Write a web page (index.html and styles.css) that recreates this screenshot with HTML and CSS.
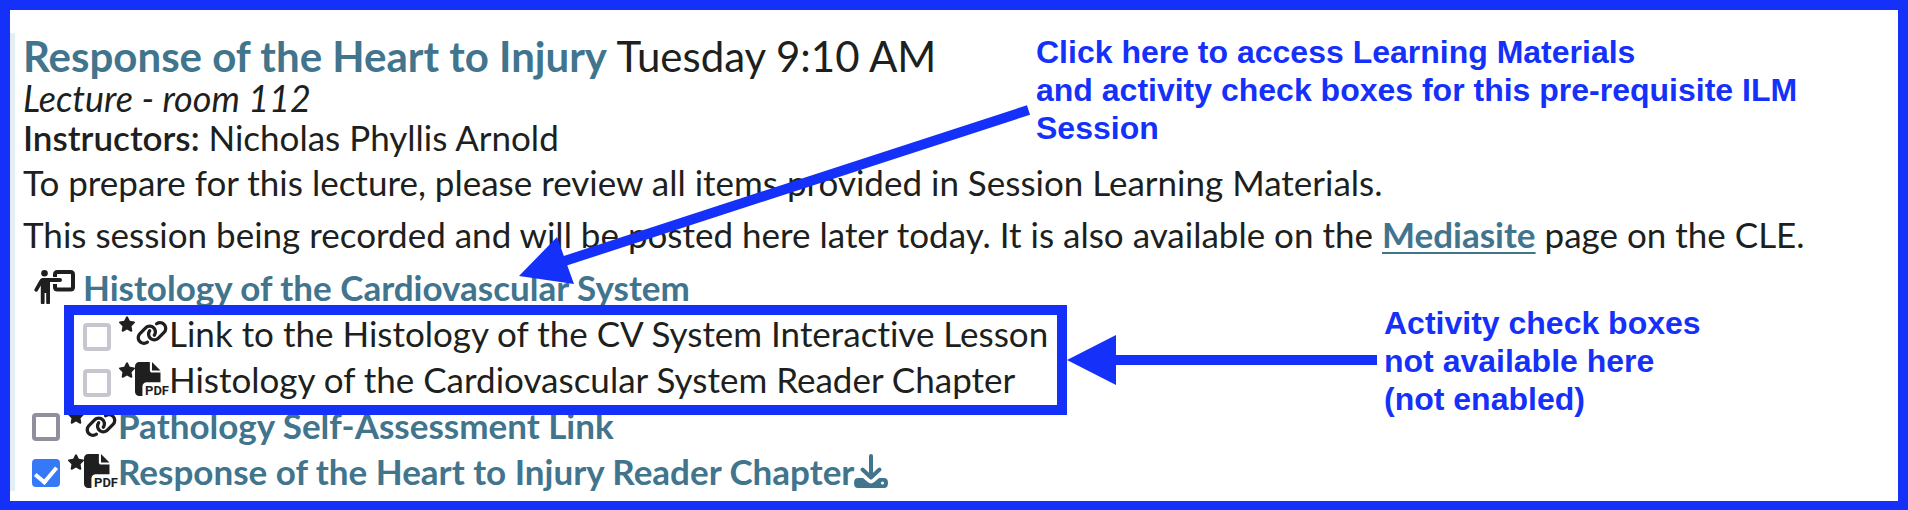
FILE: index.html
```
<!DOCTYPE html>
<html lang="en">
<head>
<meta charset="utf-8">
<title>Response of the Heart to Injury</title>
<link rel="stylesheet" href="styles.css">
</head>
<body>
<svg class="sprite" aria-hidden="true">
  <symbol id="star" viewBox="24 0 528 512"><path d="M316.9 18C311.6 7 300.4 0 288.1 0s-23.4 7-28.8 18L195 150.3 51.4 171.5c-12 1.8-22 10.2-25.7 21.7s-.7 24.2 7.9 32.7L137.8 329 113.2 474.7c-2 12 3 24.2 12.9 31.3s23 8 33.8 2.3l128.3-68.5 128.3 68.5c10.8 5.7 23.9 4.9 33.8-2.3s14.9-19.3 12.9-31.3L438.5 329 542.7 225.9c8.6-8.5 11.7-21.2 7.9-32.7s-13.7-19.9-25.7-21.7L381.2 150.3 316.9 18z"/></symbol>
  <symbol id="link" viewBox="0 0 640 512"><path d="M579.8 267.7c56.5-56.5 56.5-148 0-204.5c-50-50-128.8-56.5-186.3-15.4l-1.6 1.1c-14.4 10.3-17.7 30.3-7.4 44.6s30.3 17.7 44.6 7.4l1.6-1.1c32.1-22.9 76-19.3 103.8 8.6c31.5 31.5 31.5 82.5 0 114L422.3 334.8c-31.5 31.5-82.5 31.5-114 0c-27.9-27.9-31.5-71.8-8.6-103.8l1.1-1.6c10.3-14.4 6.9-34.4-7.4-44.6s-34.4-6.9-44.6 7.4l-1.1 1.6C206.5 251.2 213 330 263 380c56.5 56.5 148 56.5 204.5 0L579.8 267.7zM60.2 244.3c-56.5 56.5-56.5 148 0 204.5c50 50 128.8 56.5 186.3 15.4l1.6-1.1c14.4-10.3 17.7-30.3 7.4-44.6s-30.3-17.7-44.6-7.4l-1.6 1.1c-32.1 22.9-76 19.3-103.8-8.6C74 372 74 321 105.5 289.5L217.7 177.2c31.5-31.5 82.5-31.5 114 0c27.9 27.9 31.5 71.8 8.6 103.9l-1.1 1.6c-10.3 14.4-6.9 34.4 7.4 44.6s34.4 6.9 44.6-7.4l1.1-1.6C433.5 260.8 427 182 377 132c-56.5-56.5-148-56.5-204.5 0L60.2 244.3z"/></symbol>
  <symbol id="pdf" viewBox="0 0 34 34"><path transform="scale(.0664)" d="M0 64C0 28.7 28.7 0 64 0L224 0l0 128c0 17.7 14.3 32 32 32l128 0 0 144-208 0c-35.3 0-64 28.7-64 64l0 144-48 0c-35.3 0-64-28.7-64-64L0 64zm384 64l-128 0L256 0 384 128z"/><text class="pdf-label" x="10" y="33">PDF</text></symbol>
  <symbol id="presenter" viewBox="0 0 42 34"><circle cx="10.5" cy="3.3" r="3.3"/><path d="M8.5 8H26a1.8 1.8 0 0 1 0 4H16v20.500a1.800 1.800 0 0 1-3.800 0V23h-1.600v9.500a1.800 1.800 0 0 1-3.800 0V15.500l-3 5.200a1.800 1.800 0 0 1-3.200-1.800l4.500-8Q6.500 8 8.500 8z"/><path class="board" d="M21 7V4.500Q21 2 23.500 2H36.500Q39 2 39 4.500V17Q39 19.500 36.500 19.500H23.500Q21 19.500 21 17V14"/></symbol>
  <symbol id="download" viewBox="0 0 34 34"><path d="M4 24H9L14 28.300Q17 30.500 20 28.300L25 24H30Q34 24 34 29T30 34H4Q0 34 0 29T4 24z"/><circle class="hole" cx="28.500" cy="29" r="1.600"/><path class="arrow-down" d="M17 2V23M8.500 15.500L17 23.500L25.500 15.500"/></symbol>
</svg>
<div class="frame">
  <article class="session">
    <h1 class="title"><a href="#session">Response of the Heart to Injury</a> Tuesday 9:10 AM</h1>
    <p class="meta"><em>Lecture - room 112</em></p>
    <p class="meta"><strong>Instructors:</strong> Nicholas Phyllis Arnold</p>
    <div class="description">
      <p>To prepare for this lecture, please review all items provided in Session Learning Materials.</p>
      <p>This session being recorded and will be posted here later today. It is also available on the <a class="underlined" href="#mediasite">Mediasite</a> page on the CLE.</p>
    </div>
    <ul class="materials">
      <li class="prerequisite">
        <div class="row">
          <svg class="icon icon-presenter"><use href="#presenter"/></svg>
          <a href="#histology">Histology of the Cardiovascular System</a>
        </div>
        <ul class="materials nested">
          <li class="row">
            <input class="check" type="checkbox" id="m1" disabled>
            <svg class="icon icon-star"><use href="#star"/></svg><svg class="icon icon-link"><use href="#link"/></svg>
            <label for="m1">Link to the Histology of the CV System Interactive Lesson</label>
          </li>
          <li class="row">
            <input class="check" type="checkbox" id="m2" disabled>
            <svg class="icon icon-star"><use href="#star"/></svg><svg class="icon icon-pdf"><use href="#pdf"/></svg>
            <label for="m2">Histology of the Cardiovascular System Reader Chapter</label>
          </li>
        </ul>
      </li>
      <li class="row">
        <input class="check" type="checkbox" id="m3" aria-labelledby="t3">
        <svg class="icon icon-star"><use href="#star"/></svg><svg class="icon icon-link"><use href="#link"/></svg>
        <a id="t3" href="#pathology">Pathology Self-Assessment Link</a>
      </li>
      <li class="row">
        <input class="check" type="checkbox" id="m4" aria-labelledby="t4" checked>
        <svg class="icon icon-star"><use href="#star"/></svg><svg class="icon icon-pdf"><use href="#pdf"/></svg>
        <a id="t4" href="#reader">Response of the Heart to Injury Reader Chapter</a>
        <a href="#download" aria-label="Download"><svg class="icon icon-download"><use href="#download"/></svg></a>
      </li>
    </ul>
  </article>
  <svg class="arrows" aria-hidden="true">
    <path class="shaft" d="M1018.500 100L553 251.500M1367 350H1104"/>
    <path d="M509 266L547 227L564 274zM1057 350L1106 325V375z"/>
  </svg>
  <p class="note note-access">Click here to access Learning Materials<br>and activity check boxes for this pre-requisite ILM<br>Session</p>
  <p class="note note-disabled">Activity check boxes<br>not available here<br>(not enabled)</p>
</div>
</body>
</html>
```
FILE: styles.css
```
* {
  box-sizing: border-box;
}

body {
  --marker: #1531f9;
  --link: #41748d;
  --ink: #201f20;
  margin: 0;
  background: #fff;
  color: var(--ink);
  font: 35px/39px Lato, "Open Sans", sans-serif;
  font-variant-ligatures: none;
}

h1, p, ul {
  margin: 0;
  padding: 0;
}

ul {
  list-style: none;
}

a {
  color: var(--link);
  font-weight: 700;
  text-decoration: none;
}

strong {
  font-weight: 600;
}

em {
  font-size: 36px;
}

.underlined {
  text-decoration: underline;
  text-decoration-thickness: 2px;
  text-underline-offset: 4px;
}

.sprite {
  position: absolute;
  width: 0;
  height: 0;
}

.frame {
  position: relative;
  min-height: 100vh;
  padding: 23px 0 9px;
  border: 10px solid var(--marker);
  border-bottom-width: 9px;
}

.session {
  padding-left: 8px;
  border-left: 5px solid #e2eff5;
}

.title {
  font-size: 42px;
  font-weight: 400;
  line-height: 46px;
}

.description {
  display: flex;
  flex-direction: column;
  gap: 13px;
  padding: 6px 0 13px;
}

.materials {
  display: flex;
  flex-direction: column;
  gap: 6px;
  padding-left: 9px;
}

.prerequisite {
  display: flex;
  flex-direction: column;
  align-items: flex-start;
  gap: 6px;
}

.nested {
  position: relative;
  padding: 0 0 0 51px;
}

.nested::after {
  content: "";
  position: absolute;
  inset: -8px -19px -16px 32px;
  border: 10px solid var(--marker);
  z-index: 1;
  pointer-events: none;
}

.row {
  display: flex;
  align-items: flex-start;
  line-height: 40px;
}

.check {
  appearance: none;
  display: grid;
  width: 28px;
  height: 28px;
  margin: 8px 8px 0 0;
  border: 4px solid #908f9e;
  border-radius: 4px;
  background: #fff;
}

.check:disabled {
  margin-top: 10px;
  border-color: #c7c6ce;
}

.check:checked {
  place-items: start center;
  border-width: 3px;
  border-color: #3579f8;
  background: #3579f8;
}

.check:checked::after {
  content: "";
  width: 10px;
  height: 17px;
  border: solid #fff;
  border-width: 0 4px 4px 0;
  transform: rotate(40deg);
}

.icon {
  display: block;
  flex: none;
  margin-top: 3px;
  fill: currentColor;
}

.icon-star {
  width: 16px;
  height: 16px;
}

.icon-link {
  width: 34px;
  height: 26px;
  margin-top: 7px;
}

.icon-pdf {
  width: 34px;
  height: 34px;
}

.icon-presenter {
  width: 42px;
  height: 34px;
  margin: 3px 7px 0 2px;
}

.icon-download {
  width: 34px;
  height: 34px;
}

.pdf-label {
  font: bold 13px/1 Roboto, sans-serif;
}

.board {
  fill: none;
  stroke: currentColor;
  stroke-width: 4;
}

.hole {
  fill: #fff;
}

.arrow-down {
  fill: none;
  stroke: currentColor;
  stroke-width: 4;
  stroke-linecap: round;
  stroke-linejoin: round;
}

.arrows {
  position: absolute;
  inset: 0;
  width: 100%;
  height: 100%;
  fill: var(--marker);
  pointer-events: none;
}

.shaft {
  stroke: var(--marker);
  stroke-width: 10;
}

.note {
  position: absolute;
  color: var(--marker);
  font: bold 32px/38px "Liberation Sans", Arial, sans-serif;
}

.note-access {
  top: 23px;
  left: 1026px;
}

.note-disabled {
  top: 294px;
  left: 1374px;
}
```
